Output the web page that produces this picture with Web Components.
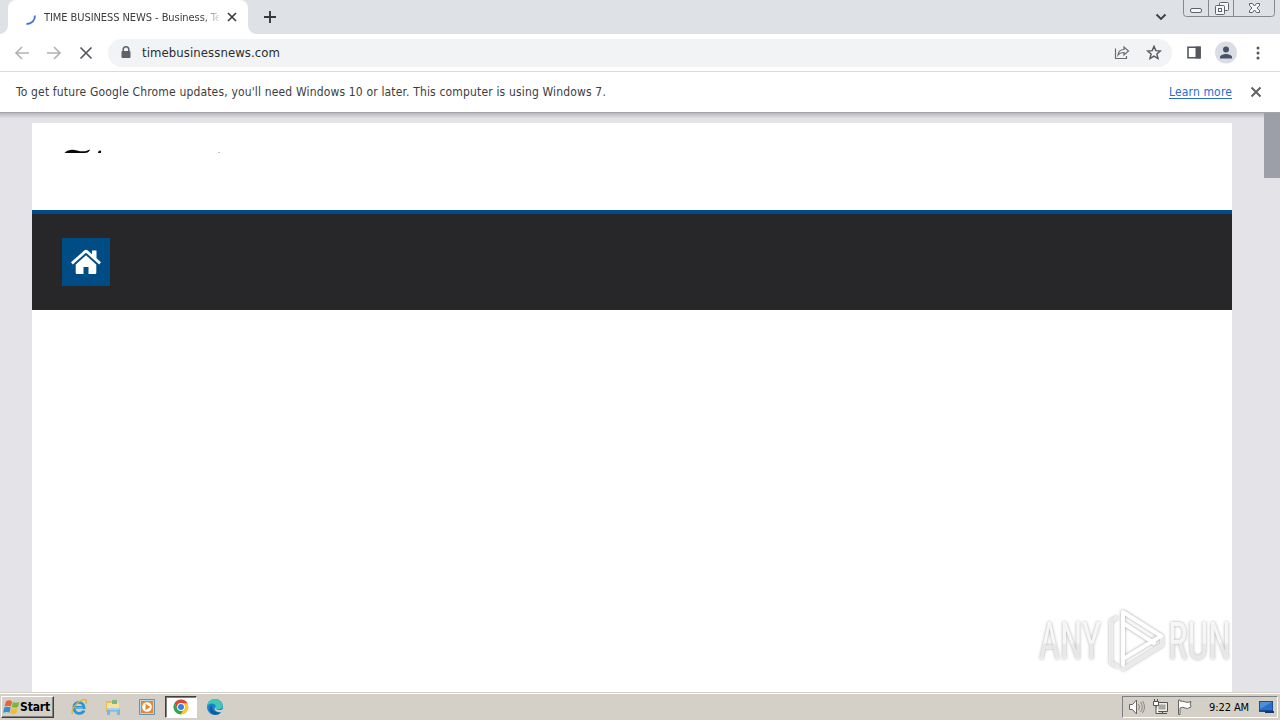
<!DOCTYPE html>
<html lang="en">
<head>
<meta charset="utf-8">
<title>TIME BUSINESS NEWS</title>
<style>
  html, body { margin: 0; height: 100%; overflow: hidden; }
  body { font-family: "DejaVu Sans Condensed", "DejaVu Sans", sans-serif; font-stretch: condensed; }
</style>
</head>
<body>
<desktop-screen>
  <browser-tabs slot="window">TIME BUSINESS NEWS - Business, Te</browser-tabs>
  <browser-toolbar slot="window">timebusinessnews.com</browser-toolbar>
  <info-bar slot="window">
    To get future Google Chrome updates, you'll need Windows 10 or later. This computer is using Windows 7.
    <span slot="link">Learn more</span>
  </info-bar>
  <page-view slot="window"></page-view>
  <task-bar slot="taskbar">9:22 AM</task-bar>
  <water-mark slot="overlay"></water-mark>
</desktop-screen>

<script>
const define = (name, html) => {
  customElements.define(name, class extends HTMLElement {
    constructor() {
      super();
      this.attachShadow({ mode: 'open' }).innerHTML = html;
    }
  });
};

// Text set to an exact width by spreading the difference over its letters
class FitText extends HTMLElement {
  constructor() {
    super();
    this.attachShadow({ mode: 'open' });
  }

  connectedCallback() {
    this.shadowRoot.innerHTML = `
      <style>
        :host { display: block; white-space: nowrap; flex: none; }
        span { display: inline-block; }
        :host(.link) span { text-decoration: underline; text-underline-offset: 2px; }
      </style>
      <span><slot></slot></span>
    `;
    requestAnimationFrame(() => this.fit());
    this.fit();
  }

  fit() {
    const span = this.shadowRoot.querySelector('span');
    const target = Number(this.getAttribute('width'));
    const nodes = this.shadowRoot.querySelector('slot').assignedNodes({ flatten: true });
    const length = nodes.map((n) => n.textContent).join('').trim().replace(/\s+/g, ' ').length;
    span.style.letterSpacing = '0px';
    const natural = span.getBoundingClientRect().width;
    if (length && natural) {
      span.style.letterSpacing = `${(target - natural) / length}px`;
    }
  }
}
customElements.define('fit-text', FitText);

define('desktop-screen', `
  <style>
    :host { display: flex; flex-direction: column; width: 1280px; height: 720px; position: relative; overflow: hidden; }
    .window { display: flex; flex-direction: column; height: 692px; flex: none; }
    ::slotted([slot="overlay"]) { position: absolute; left: 1030px; top: 600px; }
  </style>
  <div class="window"><slot name="window"></slot></div>
  <slot name="taskbar"></slot>
  <slot name="overlay"></slot>
`);

define('browser-tabs', `
  <style>
    :host { display: flex; height: 34px; flex: none; background: #dee1e6; color: #3c4043; }
    .tab { display: flex; align-items: center; box-sizing: border-box; width: 240px; height: 34px; margin-left: 8px; padding-left: 16px; background: #fff; border-radius: 8px 8px 0 0; position: relative; }
    .tab::before, .tab::after { content: ""; position: absolute; bottom: 0; width: 8px; height: 8px; }
    .tab::before { left: -8px; background: radial-gradient(circle at 0 0, transparent 7.5px, #fff 8px); }
    .tab::after { right: -8px; background: radial-gradient(circle at 100% 0, transparent 7.5px, #fff 8px); }
    .title { width: 175px; margin: 1px 0 0 4px; overflow: hidden; font-size: 11px; line-height: 16px; color: #3a3c40; -webkit-mask-image: linear-gradient(90deg, #000 158px, transparent 178px); }
    .tab .close { margin-left: 7px; }
    .plus { margin: 9px 0 0 14px; }
    .chevron { margin: 9px 0 0 876px; }
    .controls { margin-left: 14px; }
    svg { flex: none; display: block; }
  </style>
  <div class="tab">
    <svg width="16" height="16" fill="none" stroke="#3b73cf" stroke-width="1.8"><path d="M11 6.5C11 11.5 7.5 15 2.5 15" /></svg>
    <div class="title"><fit-text width="177"><slot></slot></fit-text></div>
    <svg class="close" width="12" height="12" stroke="#35383c" stroke-width="1.6"><path d="M2 2l8 8M10 2l-8 8" /></svg>
  </div>
  <svg class="plus" width="16" height="16" stroke="#35383c" stroke-width="1.9"><path d="M8 2v12M2 8h12" /></svg>
  <svg class="chevron" width="14" height="16" fill="none" stroke="#3c4043" stroke-width="1.9"><path d="M2.500 5.500L7 10l4.500-4.500" /></svg>
  <svg class="controls" width="96" height="18" fill="none" stroke="#85888d">
    <path d="M1.500 0v13.500q0 3 3 3h85q3 0 3-3V0M26.500 0v16M51.500 0v16" />
    <g stroke="#606368" fill="#f5f6f8">
      <rect x="8.500" y="8.500" width="11" height="4" rx="1.500" />
      <rect x="37.500" y="2.500" width="9" height="8" rx="1" />
      <rect x="33.500" y="5.500" width="9" height="9" rx="1" />
      <rect x="36.500" y="8.500" width="3" height="3" />
      <path d="M67.500 3.500h3l2 2.500 2-2.500h3v2l-2.500 2.500 2.500 2.500v2h-3l-2-2.500-2 2.500h-3v-2l2.500-2.500-2.500-2.500z" />
    </g>
  </svg>
`);

define('browser-toolbar', `
  <style>
    :host { display: flex; align-items: center; box-sizing: border-box; height: 38px; flex: none; padding: 0 14px; background: #fff; border-bottom: 1px solid #d9dbde; }
    svg { display: block; flex: none; }
    .nav { display: flex; gap: 16px; margin-right: 14px; }
    .omnibox { display: flex; align-items: center; box-sizing: border-box; width: 1064px; flex: none; height: 28px; padding: 0 10px; border-radius: 14px; background: #f1f3f4; font-size: 13px; line-height: 18px; color: #2c2d30; }
    .omnibox fit-text { margin: 0 auto 0 8px; }
    .star { margin-left: 16px; }
    .side { margin-left: 14px; }
    .avatar { margin-left: 12px; }
    .menu { margin-left: 12px; }
  </style>
  <div class="nav">
    <svg width="16" height="16" fill="none" stroke="#b1b3b6" stroke-width="1.7"><path d="M15 8H2M8 2L2 8l6 6" /></svg>
    <svg width="16" height="16" fill="none" stroke="#b1b3b6" stroke-width="1.7"><path d="M1 8h13M8 2l6 6-6 6" /></svg>
    <svg width="16" height="16" fill="none" stroke="#54575b" stroke-width="1.7"><path d="M2.500 2.500l11 11M13.500 2.500l-11 11" /></svg>
  </div>
  <div class="omnibox">
    <svg width="16" height="16"><path d="M5.200 7V4.500a2.800 2.800 0 015.600 0V7" fill="none" stroke="#5f6368" stroke-width="1.500" /><rect x="3.500" y="6" width="9" height="7" rx="1" fill="#5f6368" /></svg>
    <fit-text width="138"><slot></slot></fit-text>
    <svg width="16" height="16" fill="none" stroke="#686b70" stroke-width="1.200"><path d="M1.500 3.500v10h11V11M4 10c.5-4 2.500-5.500 6-5.500V2l4.500 4-4.500 4V7.500C7.500 7.500 5.500 8 4 10z" /></svg>
    <svg class="star" width="16" height="16" fill="none" stroke="#55585d" stroke-width="1.400"><path d="M8 1.300l1.800 4.300 4.600.4-3.500 3 1.100 4.500L8 11.100l-4 2.400 1.100-4.500-3.500-3 4.600-.4z" /></svg>
  </div>
  <svg class="side" width="16" height="16"><path d="M2 2.200h12v10.600H2z" fill="none" stroke="#54575b" stroke-width="1.600" /><path d="M9.500 1.500h5.200v12h-5.200z" fill="#54575b" /></svg>
  <svg class="avatar" width="24" height="24"><circle cx="12" cy="11.500" r="11" fill="#dadde3" /><circle cx="12" cy="8.500" r="3" fill="#47536b" /><path d="M6 17.500V16c0-2 4-3 6-3s6 1 6 3v1.500z" fill="#47536b" /></svg>
  <svg class="menu" width="16" height="16" fill="#54575b"><circle cx="8" cy="3" r="1.500" /><circle cx="8" cy="8" r="1.500" /><circle cx="8" cy="13" r="1.500" /></svg>
`);

define('info-bar', `
  <style>
    :host { display: flex; align-items: center; box-sizing: border-box; height: 41px; flex: none; padding: 0 18px 0 16px; background: #fff; border-bottom: 1px solid #a3a5a9; font-size: 12px; line-height: 16px; color: #3b3d41; }
    .link { margin-left: auto; color: #2c6bcb; }
    svg { display: block; margin-left: 18px; }
  </style>
  <fit-text width="590"><slot></slot></fit-text>
  <fit-text class="link" width="63"><slot name="link"></slot></fit-text>
  <svg width="12" height="12" stroke="#5b5e62" stroke-width="1.800"><path d="M1.500 1.500l9 9M10.500 1.500l-9 9" /></svg>
`);

define('page-view', `
  <style>
    :host { display: flex; justify-content: space-between; height: 579px; background: linear-gradient(#b8b9bf, #cfcfd5 3px, #dedee3 5px, #e3e3e8 7px); }
    .page { display: flex; flex-direction: column; width: 1200px; margin: 10px 0 0 32px; background: #fff; }
    .logo { height: 87px; }
    .bar { display: flex; align-items: center; box-sizing: border-box; height: 100px; padding-left: 30px; border-top: 4px solid #004e87; background: #27272a; }
    .home { display: flex; align-items: center; justify-content: center; width: 48px; height: 48px; background: #004c84; }
    .scroll { width: 16px; }
    .thumb { height: 65px; background: #9c9fa7; }
    svg { display: block; }
  </style>
  <div class="page">
    <div class="logo">
      <svg width="240" height="30"><path d="M32.500 30c3-3.500 8-4 12.500-2.600 5 1.300 9 1.200 12.500-1l.3.800c-1 2.200-3 2.600-5 2.800zM66 30c0-2.600 3-3.300 3.200-1 0 .500-.5 1-.8 1z" fill="#08080c" /><path d="M185.500 29.500l2-.6.500 1z" fill="#8a8a8a" /></svg>
    </div>
    <div class="bar">
      <div class="home">
        <svg width="32" height="32" fill="#fff"><path d="M16 3.800q.9 0 1.800.8L22 8.300V4.500h4.500v7.800l4.500 4-1.800 2.300L16.700 7.300q-.7-.6-1.400 0L2.800 18.600 1 16.300l13.200-11.700q.9-.8 1.800-.8z" /><path d="M16 9.300L26.300 18.500v8.300q0 1.200-1.200 1.200H18.500v-7h-5v7H6.900q-1.200 0-1.200-1.200v-8.300z" /></svg>
      </div>
    </div>
  </div>
  <div class="scroll"><div class="thumb"></div></div>
`);

define('task-bar', `
  <style>
    :host { display: flex; align-items: flex-start; box-sizing: border-box; height: 28px; flex: none; padding: 2px 2px 0 1px; border-top: 1px solid #d4d0c8; background: #d4d0c8; box-shadow: inset 0 1px #fff; font-size: 11px; color: #000; }
    svg { display: block; flex: none; }
    .start { display: flex; align-items: center; box-sizing: border-box; width: 53px; height: 22px; margin-top: 1px; padding-left: 1px; border: 1px solid; border-color: #fff #404040 #404040 #fff; box-shadow: inset -1px -1px #808080; font-weight: bold; font-size: 12px; }
    .quick { display: flex; margin: 1px 0 0 9px; }
    .item { display: flex; align-items: center; justify-content: center; box-sizing: border-box; width: 32px; height: 22px; margin-right: 2px; }
    .active { border: 1px solid; border-color: #404040 #fff #fff #404040; background: #fff; box-shadow: inset 1px 1px #808080; }
    .tray { display: flex; align-items: center; box-sizing: border-box; width: 156px; height: 22px; margin: 1px 0 0 auto; padding-left: 5px; border: 1px solid; border-color: #808080 #fff #fff #808080; }
    .tray svg { margin-right: 7px; }
    .tray fit-text { margin: 0 9px 0 9px; }
    .tray svg:last-child { margin: 0; }
  </style>
  <div class="start">
    <svg width="17" height="18"><path d="M3 3.500Q6 1 9 3.500L8 8.500Q5 7 1.500 8.500z" fill="#e66432" /><path d="M9.800 4q3 1.500 6.500 0l-1.300 5q-3 1.500-6.200 0z" fill="#79b541" /><path d="M1.300 9.500q3-1.500 6.400 0L6.500 14.800q-2.500-1.800-6.300 0z" fill="#368ed0" /><path d="M8.500 10q3 1.600 6.200 0l-1.400 5.500q-3 1.500-6.200 0z" fill="#f2bd32" /></svg>
    <fit-text width="30">Start</fit-text>
  </div>
  <div class="quick">
    <div class="item"><svg width="18" height="18" fill="none"><path d="M14 12.500C12 17 4 16.500 4 9.500S13.500 3 14 9.500H5" stroke="#2d94cf" stroke-width="2.800" /><path d="M5 10h8" stroke="#8dd3f2" /><path d="M3 16C-1 14 7 3 14 1.700c3-.5 3 1.500 1.600 4" stroke="#ddb43b" stroke-width="1.300" /></svg></div>
    <div class="item"><svg width="18" height="18"><path d="M2 3h5l1 2h7v9H2z" fill="#e5bd55" /><path d="M3 5h12v7H3z" fill="#f6e29a" /><path d="M8 2h5v4H8z" fill="#7cb982" /><path d="M3 17v-5q0-2 2-2h9q2 0 2 2v5h-3v-4H6v4z" fill="#79b9dd" /><path d="M4 11h11" stroke="#d1edf8" /></svg></div>
    <div class="item"><svg width="18" height="18"><path d="M1.500 1.500h15v15h-15z" fill="#b9d5e8" stroke="#5b94bd" /><path d="M3 3h12v12H3z" fill="#e9862a" /><circle cx="9" cy="9" r="4.800" fill="#fff" /><path d="M7.500 5.800l5 3.200-5 3.200z" fill="#e9862a" /></svg></div>
    <div class="item active"><svg width="18" height="18"><circle cx="9" cy="9" r="7.500" fill="#f8c62e" /><path d="M2.500 5.250A7.500 7.500 0 0115.500 5.250H9L6 11z" fill="#df4637" /><path d="M2.500 5.250A7.500 7.500 0 008.600 16.500L12.200 10.500 9 12.500 5.700 10.700z" fill="#36a456" /><circle cx="9" cy="9" r="3.900" fill="#fff" /><circle cx="9" cy="9" r="3" fill="#3d7de0" /></svg></div>
    <div class="item"><svg width="18" height="18"><circle cx="9" cy="9" r="8" fill="#1681cf" /><path d="M1.200 8C2 1 10-1 14.500 3.200c3 3 3 8-1.500 8-3 0-4-.8-3-2.200C10 5 4 4 1.200 8z" fill="#42c6b5" /><path d="M6 8c-1 4 3 7 8.800 6.500C10 19 3 16 4 10.500 4.300 9 5 8.300 6 8z" fill="#14589d" /><path d="M9.500 8c-.5 2.500.5 4 5 4L17.500 11 16 14c-5 1-9-2-6.500-6z" fill="#d4d0c8" /></svg></div>
  </div>
  <div class="tray">
    <svg width="17" height="18" fill="none" stroke="#66645f"><path d="M1.500 6.500h3l4-4.500v14l-4-4.500h-3z" fill="#fff" /><path d="M10.500 6q2 3 0 6M12.500 4q3.500 5 0 10M14.500 3q4 6 0 12" stroke="#8b8882" /></svg>
    <svg width="17" height="18" fill="none" stroke="#55534e"><path d="M4.500 4.500h11v9h-11zM6 15.500h9M10.500 14v2" fill="#eee" /><path d="M6.500 6.500h7v5h-7z" fill="#aaa79f" stroke="none" /><path d="M1.500 3.500h5v4h-5zM2.500 1v2M5.500 1v2M4 8v7.500h3" fill="#fff" /></svg>
    <svg width="17" height="18" fill="#fff" stroke="#66645f"><path d="M2.500 2v14.500h1.500V10q3-1.500 5 0t6-1q-1.500-3 0-5.500-3 1.500-5.500.5T4 3V2z" /></svg>
    <fit-text width="40"><slot></slot></fit-text>
    <svg width="17" height="18"><path d="M1 3h14v11H1z" fill="#174c9a" /><path d="M2 4h12v8H2z" fill="#2870c6" /><path d="M2 4h12L2 11z" fill="#4b91da" /><path d="M7 13h9v2H7z" fill="#173768" /></svg>
  </div>
`);

define('water-mark', `
  <style>
    :host { display: block; width: 210px; height: 80px; }
    svg { display: block; filter: drop-shadow(0 0 1.500px rgba(0, 0, 0, .38)); }
    text { font-family: Roboto, sans-serif; font-size: 51px; fill: #fff; fill-opacity: .85; }
    path { fill: none; stroke: #fff; stroke-width: 4; stroke-linejoin: round; stroke-linecap: round; }
    .shade { fill: #f0f0f0; }
  </style>
  <svg width="210" height="80">
    <defs><linearGradient id="fade" x2="0" y2="1"><stop offset=".53" stop-color="#fff" /><stop offset=".54" stop-color="#efefef" /></linearGradient></defs>
    <text x="9" y="59" textLength="62" lengthAdjust="spacingAndGlyphs" style="fill: url(#fade)">ANY</text>
    <path d="M86 18l-5 3v42l6 3M93 69l39-24V37" stroke-opacity=".8" style="stroke: #f4f4f4" />
    <path d="M93 12v53M93 12l38 24-38 23M93 23l31 20" />
    <text x="138" y="59" textLength="63" lengthAdjust="spacingAndGlyphs" style="fill: url(#fade)">RUN</text>
  </svg>
`);
</script>
</body>
</html>
